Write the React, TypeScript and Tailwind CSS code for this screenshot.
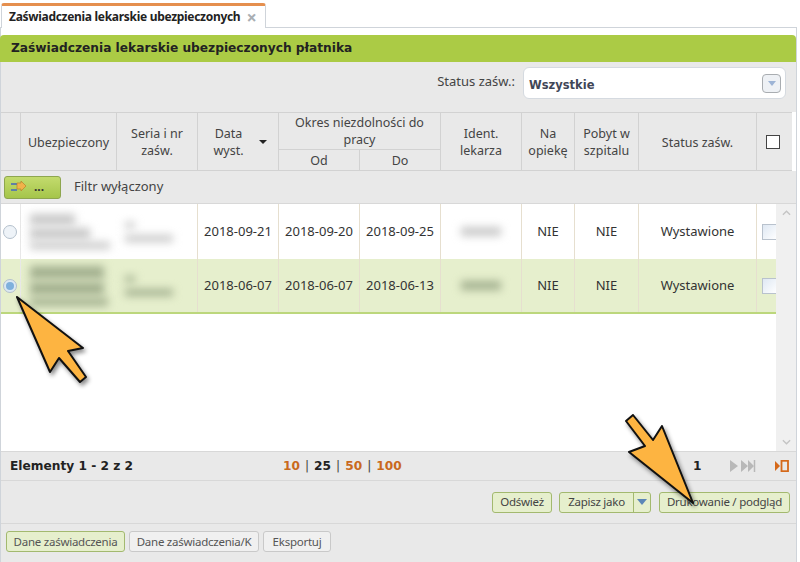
import { ReactNode } from "react";

const gridCols = "grid-cols-[20px_96px_81px_81px_81px_81px_81px_53px_64px_118px_35px]";
const rowCols = "grid-cols-[20px_96px_81px_81px_81px_81px_81px_53px_64px_118px_19px]";
const boldFont = "font-['DejaVu_Sans',sans-serif] font-bold";

function HeadCell({ children, className = "" }: { children?: ReactNode; className?: string }) {
  return (
    <div className={`flex items-center justify-center text-center leading-[17px] border-r border-[#d2d2d2] ${className}`}>
      {children}
    </div>
  );
}

function Blur({ w, h, dark }: { w: string; h: string; dark: boolean }) {
  return <div className={`${w} ${h} blur-[4px] ${dark ? "bg-[#a3b08f]" : "bg-[#c8c8c8]"}`} />;
}

function Row({ first, date, from, to, selected }: { first: boolean; date: string; from: string; to: string; selected: boolean }) {
  const cell = "flex items-center justify-center border-r border-[#e6dfcf] text-[13px] text-[#333]";
  return (
    <div className={`grid ${rowCols} h-[55px] overflow-hidden ${selected ? "bg-[#e6efcd] border-b-2 border-[#bcd77c]" : "bg-white"}`}>
      <div className="flex items-center justify-center border-r border-[#e8e8e8] pr-[2px]">
        <span className={`w-[14px] h-[14px] rounded-full border border-[#b4c0cc] flex items-center justify-center ${selected ? "bg-[#dbe8f2]" : "bg-[#eef3f8]"}`}>
          {selected && <span className="w-[8px] h-[8px] rounded-full bg-[#7fb0dc]" />}
        </span>
      </div>
      <div className="flex flex-col justify-center gap-[3px] pl-[9px]">
        {first ? (
          <>
            <Blur w="w-[45px]" h="h-[11px]" dark={false} />
            <Blur w="w-[60px]" h="h-[11px]" dark={false} />
            <Blur w="w-[80px]" h="h-[7px]" dark={false} />
          </>
        ) : (
          <>
            <Blur w="w-[74px]" h="h-[13px]" dark />
            <Blur w="w-[74px]" h="h-[13px]" dark />
            <Blur w="w-[78px]" h="h-[8px]" dark />
          </>
        )}
      </div>
      <div className="flex flex-col justify-center gap-[7px] pl-[8px] border-r border-[#e6dfcf]">
        <Blur w="w-[10px]" h="h-[6px]" dark={!first} />
        <Blur w="w-[48px]" h="h-[7px]" dark={!first} />
      </div>
      <div className={cell}>{date}</div>
      <div className={cell}>{from}</div>
      <div className={cell}>{to}</div>
      <div className={cell}>
        <Blur w="w-[40px]" h="h-[9px]" dark={!first} />
      </div>
      <div className={cell}>NIE</div>
      <div className={cell}>NIE</div>
      <div className={cell}>Wystawione</div>
      <div className="flex items-center pl-[5px]">
        <span className="shrink-0 w-[16px] h-[16px] border border-[#b9c2cd] bg-gradient-to-br from-[#dfe8f3] to-white" />
      </div>
    </div>
  );
}

function Btn({ children, className = "" }: { children: ReactNode; className?: string }) {
  return (
    <button className={`h-[21px] rounded-[3px] border border-[#a3b96f] bg-[#e6efcd] text-[11.500px] tracking-[-0.25px] text-[#444] whitespace-nowrap flex items-center justify-center ${className}`}>
      {children}
    </button>
  );
}

function Arrow({ className, d }: { className: string; d: string }) {
  return (
    <svg viewBox="0 0 74 92" className={`absolute w-[74px] h-[92px] overflow-visible drop-shadow-[2px_3px_2px_rgba(0,0,0,0.45)] ${className}`}>
      <path d={d} fill="#fdb441" stroke="#111" strokeWidth="2" strokeLinejoin="round" />
    </svg>
  );
}

export default function App() {
  return (
    <div className="relative w-[800px] h-[562px] overflow-hidden bg-white font-['Noto_Sans',sans-serif] text-[#444]">
      {/* tabs */}
      <div className="h-[28px] pt-[3px] border-b border-[#cfd4da] flex mr-[3px]">
        <div className="ml-[1px] w-[265px] h-[25px] bg-white border-t-[3px] border-[#e58f4e] border-x border-x-[#cfd4da] rounded-t-[3px] flex items-center pl-[7px] gap-[6px]">
          <span className="text-[12px] tracking-[-0.3px] font-bold text-[#222] whitespace-nowrap">Zaświadczenia lekarskie ubezpieczonych</span>
          <span className="text-[18px] font-bold text-[#a9aeb3] leading-none">×</span>
        </div>
      </div>

      <div className="h-[534px] pt-[7px] mr-[3px] border-r border-[#cfd4da] border-l flex flex-col">
        <div className={`h-[27px] shrink-0 -ml-[1px] bg-[#abcb45] rounded-t-[4px] flex items-center pl-[11px] text-[12.200px] text-[#222] whitespace-nowrap ${boldFont}`}>
          Zaświadczenia lekarskie ubezpieczonych płatnika
        </div>

        <div className="h-[50px] shrink-0 bg-[#e9e9e9] flex items-center justify-end pr-[10px] gap-[8px] text-[13px]">
          <span className="mb-[10px]">Status zaśw.:</span>
          <div className="w-[263px] h-[32px] mb-[8px] rounded-[6px] bg-white border border-[#d5dae0] flex items-center justify-between pl-[5px] pr-[4px]">
            <span className={`mt-[5px] text-[11.500px] text-[#3f4657] ${boldFont}`}>Wszystkie</span>
            <span className="w-[19px] h-[19px] rounded-[4px] border border-[#a9adb1] bg-[#eef1f5] flex items-center justify-center">
              <span className="w-0 h-0 border-x-[4px] border-x-transparent border-t-[5px] border-t-[#9db4d6]" />
            </span>
          </div>
        </div>

        {/* table header */}
        <div className={`grid ${gridCols} grid-rows-[37px_21px] shrink-0 bg-[#e9e9e9] border-y border-[#d2d2d2] text-[12.500px] h-[59px] mr-[4px]`}>
          <HeadCell className="row-span-2" />
          <HeadCell className="row-span-2">Ubezpieczony</HeadCell>
          <HeadCell className="row-span-2">Seria i nr<br />zaśw.</HeadCell>
          <HeadCell className="row-span-2 gap-[15px] pl-[4px]">
            <span>Data<br />wyst.</span>
            <span className="w-0 h-0 border-x-[4px] border-x-transparent border-t-[4px] border-t-[#222] mb-[1px]" />
          </HeadCell>
          <HeadCell className="col-span-2 border-b">Okres niezdolności do<br />pracy</HeadCell>
          <HeadCell className="row-span-2">Ident.<br />lekarza</HeadCell>
          <HeadCell className="row-span-2">Na<br />opiekę</HeadCell>
          <HeadCell className="row-span-2">Pobyt w<br />szpitalu</HeadCell>
          <HeadCell className="row-span-2">Status zaśw.</HeadCell>
          <div className="row-span-2 flex items-center justify-center pr-[3px]">
            <span className="w-[14px] h-[14px] border border-[#444] bg-white" />
          </div>
          <HeadCell>Od</HeadCell>
          <HeadCell>Do</HeadCell>
        </div>

        {/* filter */}
        <div className="h-[33px] shrink-0 bg-[#e9e9e9] border-b border-[#d8d8d8] flex items-center pl-[3px] gap-[13px] text-[13px]">
          <button className="w-[57px] h-[23px] rounded-[3px] border border-[#8ea64f] bg-gradient-to-b from-[#c3db6d] to-[#a5c54a] flex items-center pl-[6px] gap-[7px] text-[#333] font-bold leading-none">
            <svg viewBox="0 0 16 12" className="w-[16px] h-[12px]">
              <path d="M0 3h6M0 9h6" stroke="#5f7fa5" strokeWidth="2" />
              <path d="M6 2h4V0l5 5-5 5V8H6z" fill="#f1b24a" stroke="#b9822a" strokeWidth="0.7" />
            </svg>
            <span className="text-[12px]">...</span>
          </button>
          <span>Filtr wyłączony</span>
        </div>

        {/* data */}
        <div className="h-[247px] shrink-0 bg-white flex">
          <div className="w-[775px]">
            <Row first date="2018-09-21" from="2018-09-20" to="2018-09-25" selected={false} />
            <Row first={false} date="2018-06-07" from="2018-06-07" to="2018-06-13" selected />
          </div>
          <div className="w-[20px] bg-[#f0f0f0] flex flex-col items-center justify-between py-[6px] text-[#c4c4c4]">
            <svg viewBox="0 0 10 6" className="w-[9px] h-[6px]"><path d="M1 5l4-4 4 4" fill="none" stroke="currentColor" strokeWidth="1.5" /></svg>
            <svg viewBox="0 0 10 6" className="w-[9px] h-[6px]"><path d="M1 1l4 4 4-4" fill="none" stroke="currentColor" strokeWidth="1.5" /></svg>
          </div>
        </div>

        {/* pager */}
        <div className={`h-[30px] shrink-0 bg-[#e9e9e9] border-y border-[#d8d8d8] flex items-center pl-[9px] text-[12.200px] text-[#222] ${boldFont}`}>
          <span className="w-[273px] shrink-0">Elementy 1 - 2 z 2</span>
          <span className="flex gap-[5px] w-[300px] shrink-0 text-[#c9691d]">
            <span>10</span><span className="font-normal text-[#444]">|</span>
            <span className="text-[#222]">25</span><span className="font-normal text-[#444]">|</span>
            <span>50</span><span className="font-normal text-[#444]">|</span>
            <span>100</span>
          </span>
          <span className="w-[147px] shrink-0 pl-[110px]">1</span>
          <svg viewBox="0 0 26 12" className="w-[26px] h-[12px] shrink-0 text-[#b8b8b8]">
            <path d="M0 0l8 6-8 6zM11 0l7 6-7 6zM18 0l6 6-6 6z" fill="currentColor" />
            <path d="M24.500 0v12" stroke="currentColor" strokeWidth="1.500" />
          </svg>
          <svg viewBox="0 0 14 12" className="ml-[19px] w-[14px] h-[12px] shrink-0">
            <path d="M0 1l5 5-5 5z" fill="#d5691a" />
            <rect x="6.500" y="0.800" width="6.500" height="10.400" fill="none" stroke="#d5691a" strokeWidth="1.800" />
          </svg>
        </div>

        {/* actions */}
        <div className="h-[43px] shrink-0 bg-[#e9e9e9] border-b border-[#d8d8d8] flex items-center justify-end pr-[6px] gap-[7px]">
          <Btn className="w-[60px]">Odśwież</Btn>
          <Btn className="w-[92px]">
            <span className="flex-1">Zapisz jako</span>
            <span className="w-[17px] h-full border-l border-[#a3b96f] flex items-center justify-center">
              <span className="w-0 h-0 border-x-[5px] border-x-transparent border-t-[6px] border-t-[#5c86b8]" />
            </span>
          </Btn>
          <Btn className="w-[131px] ml-[1px]">Drukowanie / podgląd</Btn>
        </div>

        {/* bottom tabs */}
        <div className="flex-1 bg-[#e9e9e9] flex items-start pt-[7px] pl-[5px] gap-[4px] text-[11.500px] tracking-[-0.25px] text-[#555] whitespace-nowrap">
          <div className="w-[119px] h-[21px] rounded-[3px] border border-[#a3b96f] bg-[#e6efcd] flex items-center justify-center">Dane zaświadczenia</div>
          <div className="w-[130px] h-[21px] rounded-[3px] border border-[#c9c9c9] bg-[#f0f0f0] flex items-center justify-center">Dane zaświadczenia/K</div>
          <div className="w-[68px] h-[21px] rounded-[3px] border border-[#c9c9c9] bg-[#f0f0f0] flex items-center justify-center">Eksportuj</div>
        </div>
      </div>

      {/* annotation arrows */}
      <Arrow className="left-[15px] top-[295px]" d="M2 2L68 53L53 56L71 82L65 87L44 63L35 77Z" />
      <Arrow className="left-[624px] top-[413px]" d="M69 90L38 13L29 27L9 2L2 8L21 33L5 39Z" />
    </div>
  );
}
